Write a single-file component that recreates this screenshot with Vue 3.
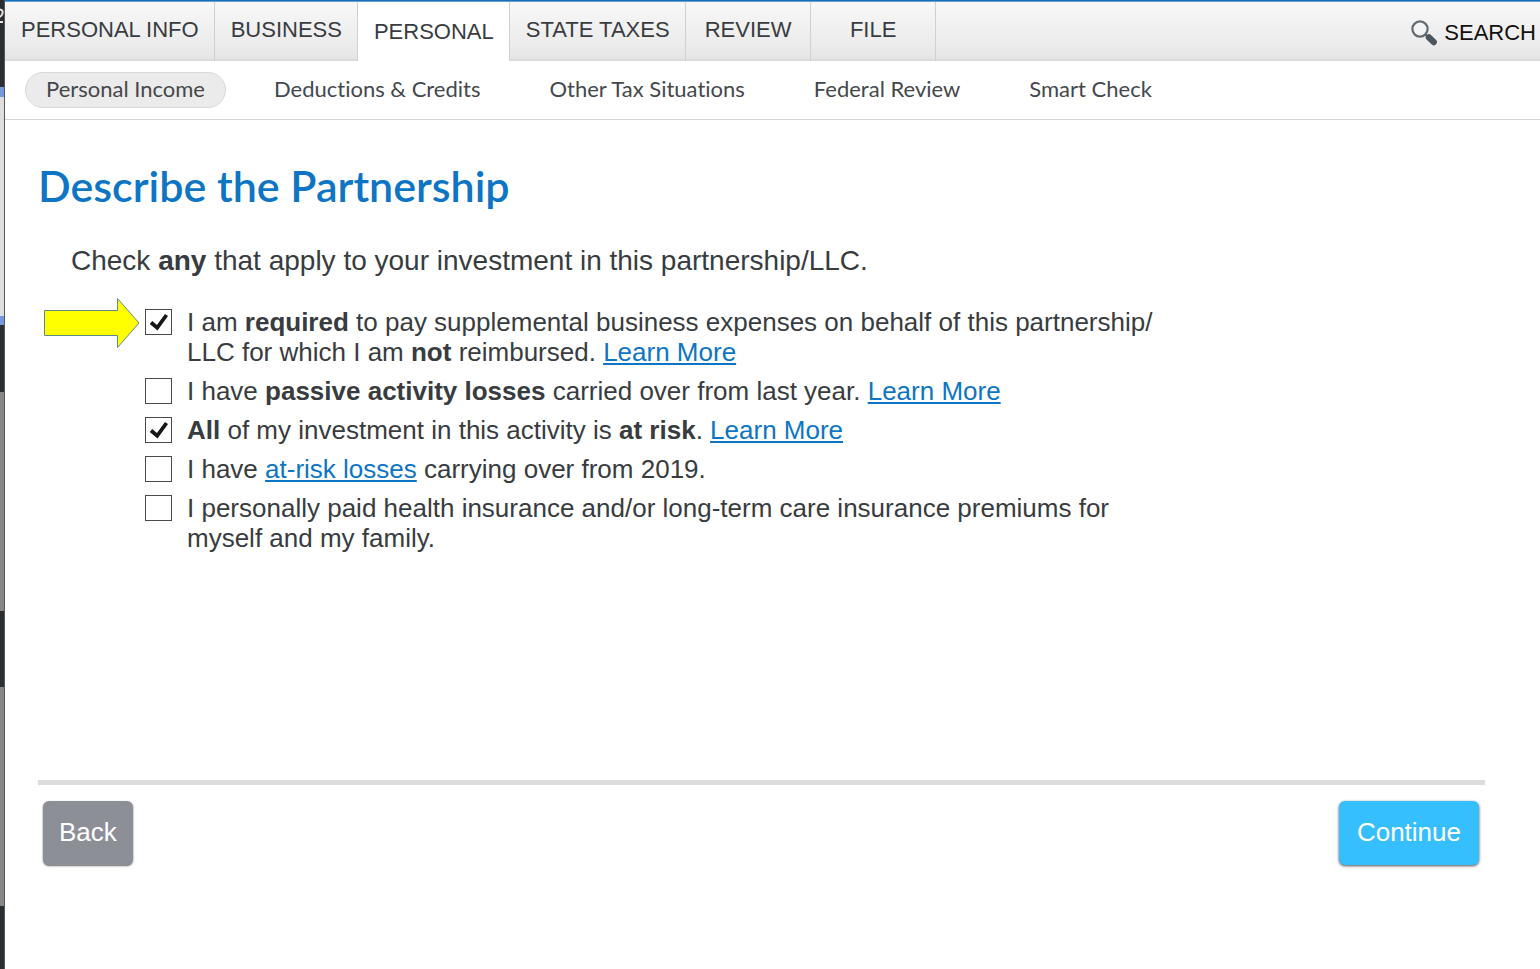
<script setup>
import { ref } from 'vue'

const tabs = ['PERSONAL INFO', 'BUSINESS', 'PERSONAL', 'STATE TAXES', 'REVIEW', 'FILE']
const sections = ['Personal Income', 'Deductions & Credits', 'Other Tax Situations', 'Federal Review', 'Smart Check']
const activeTab = ref('PERSONAL')
const activeSection = ref('Personal Income')

const edge = [
  { tone: 'dark', size: 87 },
  { tone: 'blue', size: 10 },
  { tone: 'light', size: 219 },
  { tone: 'blue', size: 9 },
  { tone: 'dark', size: 67 },
  { tone: 'grey', size: 219 },
  { tone: 'dark', size: 76 },
  { tone: 'grey', size: 219 },
  { tone: 'dark', size: 63 }
]

const options = ref([
  {
    id: 'supplemental',
    checked: true,
    pointed: true,
    parts: [
      { text: 'I am ' },
      { text: 'required', kind: 'bold' },
      { text: ' to pay supplemental business expenses on behalf of this partnership/' },
      { kind: 'break' },
      { text: 'LLC for which I am ' },
      { text: 'not', kind: 'bold' },
      { text: ' reimbursed. ' },
      { text: 'Learn More', kind: 'link' }
    ]
  },
  {
    id: 'passive',
    checked: false,
    parts: [
      { text: 'I have ' },
      { text: 'passive activity losses', kind: 'bold' },
      { text: ' carried over from last year. ' },
      { text: 'Learn More', kind: 'link' }
    ]
  },
  {
    id: 'at-risk',
    checked: true,
    parts: [
      { text: 'All', kind: 'bold' },
      { text: ' of my investment in this activity is ' },
      { text: 'at risk', kind: 'bold' },
      { text: '. ' },
      { text: 'Learn More', kind: 'link' }
    ]
  },
  {
    id: 'carryover',
    checked: false,
    parts: [
      { text: 'I have ' },
      { text: 'at-risk losses', kind: 'link' },
      { text: ' carrying over from 2019.' }
    ]
  },
  {
    id: 'health',
    checked: false,
    parts: [
      { text: 'I personally paid health insurance and/or long-term care insurance premiums for myself and my family.' }
    ]
  }
])
</script>

<template>
  <div class="page">
    <div class="edge" aria-hidden="true">
      <div v-for="(s, i) in edge" :key="i" class="segment" :class="s.tone" :style="{ flexGrow: s.size }"></div>
      <svg class="edge-mark" viewBox="0 0 4 16" width="4" height="16">
        <path d="M0 1.5C3.6 2 3.6 6 0 9" fill="none" stroke="#e4e4e4" stroke-width="2" />
        <path d="M0 14H3" fill="none" stroke="#e4e4e4" stroke-width="2" />
      </svg>
    </div>
    <div class="content">
      <header class="topbar">
        <nav class="tabs" aria-label="Main">
          <button
            v-for="t in tabs"
            :key="t"
            type="button"
            class="tab"
            :class="{ active: t === activeTab }"
            @click="activeTab = t"
          >{{ t }}</button>
        </nav>
        <button type="button" class="search">
          <svg viewBox="0 0 28 28" width="28" height="28" aria-hidden="true">
            <circle cx="10" cy="10" r="7.6" fill="#f4f4f4" stroke="#646b70" stroke-width="2.2" />
            <path d="M15.5 15.5L18.5 18.5" stroke="#646b70" stroke-width="2.4" />
            <path d="M19 18.5L23.7 23" stroke="#4d565d" stroke-width="6.4" stroke-linecap="round" />
          </svg>
          <span>SEARCH</span>
        </button>
      </header>

      <nav class="sections" aria-label="Personal sections">
        <a
          v-for="s in sections"
          :key="s"
          href="#"
          class="section"
          :class="{ active: s === activeSection }"
          @click.prevent="activeSection = s"
        >{{ s }}</a>
      </nav>

      <main>
        <h1>Describe the Partnership</h1>
        <p class="intro">Check <b>any</b> that apply to your investment in this partnership/LLC.</p>
        <ul class="options">
          <li v-for="o in options" :key="o.id" class="option">
            <svg v-if="o.pointed" class="arrow" viewBox="0 0 96 52" width="96" height="52" aria-hidden="true">
              <path d="M0.5 13.5H73.5V1.5L95 26L73.5 50.5V38.5H0.5Z" fill="#ffff00" stroke="#5f8a84" stroke-width="1" />
            </svg>
            <span class="box">
              <input :id="o.id" v-model="o.checked" type="checkbox" />
              <svg v-if="o.checked" class="tick" viewBox="0 0 27 26" width="27" height="26" aria-hidden="true">
                <path d="M6 13.5L12.2 18.8L21.5 6" fill="none" stroke="#161616" stroke-width="3.8" />
              </svg>
            </span>
            <label :for="o.id"><template v-for="(p, i) in o.parts" :key="i"><b v-if="p.kind === 'bold'">{{ p.text }}</b><a v-else-if="p.kind === 'link'" href="#" @click.prevent>{{ p.text }}</a><wbr v-else-if="p.kind === 'break'" /><template v-else>{{ p.text }}</template></template></label>
          </li>
        </ul>
        <footer class="actions">
          <button type="button" class="action back">Back</button>
          <button type="button" class="action continue">Continue</button>
        </footer>
      </main>
    </div>
  </div>
</template>

<style>
body {
  margin: 0;
  background: #fff;
}
</style>

<style scoped>
.page {
  display: flex;
  min-height: 100vh;
  font-family: "Liberation Sans", Arial, sans-serif;
  color: #383c40;
}
.edge {
  position: relative;
  flex: none;
  box-sizing: border-box;
  width: 5px;
  display: flex;
  flex-direction: column;
  border-right: 1px solid #55585a;
}
.segment { flex-basis: 0; }
.dark { background: #2b2e31; }
.blue { background: #7598d8; }
.light { background: #dedede; }
.grey { background: #878787; }
.edge-mark {
  position: absolute;
  top: 8px;
  left: 0;
}
.content {
  flex: 1;
  min-width: 0;
  border-top: 1px solid #1a6fb8;
}
button {
  margin: 0;
  border: 0;
  font: inherit;
  color: inherit;
  cursor: pointer;
}
.topbar {
  display: flex;
  justify-content: space-between;
  height: 60px;
  background: linear-gradient(#f8f8f8, #ececec 70%, #e4e4e4);
  box-shadow: inset 0 1px #5fa0d8, inset 0 -2px #dadada;
}
.tabs { display: flex; }
.tab {
  box-sizing: border-box;
  min-width: 125px;
  margin-top: 1px;
  padding: 0 15px 4px 16px;
  border-right: 1px solid #d0d0d0;
  background: none;
  font-size: 22px;
  white-space: nowrap;
}
.tab.active {
  padding-bottom: 0;
  background: #fff;
}
.search {
  display: flex;
  align-items: center;
  gap: 6px;
  padding: 4px 4px 0 0;
  background: none;
  font-size: 22px;
  color: #111;
}
.sections {
  display: flex;
  align-items: center;
  gap: 27px;
  height: 58px;
  padding-left: 20px;
  border-bottom: 1px solid #d4d4d4;
}
.section {
  box-sizing: border-box;
  height: 36px;
  padding: 0 20px;
  border: 1px solid transparent;
  border-radius: 18px;
  font-family: Lato, sans-serif;
  font-size: 22px;
  font-variant-ligatures: none;
  line-height: 32px;
  color: #44484c;
  text-decoration: none;
  white-space: nowrap;
}
.section.active {
  background: #ebebeb;
  border-color: #d8d8d8;
}
main { padding: 40px 55px 40px 33px; }
h1 {
  margin: 0;
  font-family: Lato, sans-serif;
  font-size: 43px;
  font-weight: 600;
  line-height: 52px;
  color: #0d75c4;
}
.intro {
  margin: 34px 0 0 33px;
  font-size: 28px;
  line-height: 30px;
}
.options {
  display: flex;
  flex-direction: column;
  gap: 9px;
  max-width: 1028px;
  min-height: 473px;
  margin: 31px 0 0 107px;
  padding: 0;
  list-style: none;
}
.option {
  position: relative;
  display: flex;
  gap: 15px;
  font-size: 26px;
  line-height: 30px;
}
.box {
  position: relative;
  flex: none;
  width: 27px;
  height: 26px;
  margin-top: 2px;
}
.box input {
  appearance: none;
  display: block;
  box-sizing: border-box;
  width: 27px;
  height: 26px;
  margin: 0;
  border: 1px solid #4a4a4a;
  background: #fff;
}
.tick {
  position: absolute;
  top: 0;
  left: 0;
  pointer-events: none;
}
.arrow {
  position: absolute;
  top: -10px;
  left: -101px;
}
.option a { color: #0d75c4; }
.actions {
  display: flex;
  justify-content: space-between;
  padding: 16px 6px 0 5px;
  border-top: 5px solid #dcdcdc;
}
.action {
  height: 64px;
  padding: 0 18px 2px;
  border-radius: 6px;
  font-size: 26px;
  color: #fff;
}
.back {
  padding-right: 16px;
  padding-left: 16px;
  background: #8c9096;
  box-shadow: 0 1px 2px rgba(0, 0, 0, 0.6);
}
.continue {
  background: #35bfff;
  box-shadow: 0 1px 3px rgba(0, 0, 0, 0.7);
}
</style>
